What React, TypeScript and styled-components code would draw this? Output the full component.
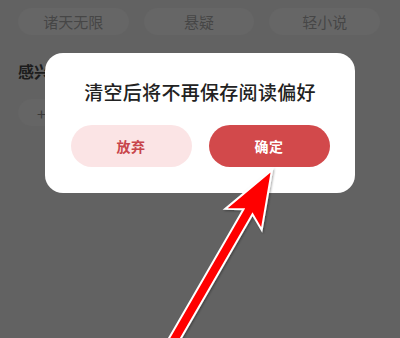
import React from "react";
import styled, { createGlobalStyle } from "styled-components";

const GlobalStyle = createGlobalStyle`
  html, body {
    margin: 0;
    padding: 0;
    background: #626262;
    font-family: "Noto Sans CJK SC", "Noto Sans", sans-serif;
  }
`;

const Page = styled.div`
  position: relative;
  width: 400px;
  height: 338px;
  overflow: hidden;
  background: #626262;
`;

const TagRow = styled.div`
  display: flex;
  gap: 15px;
  padding: 8px 20px 0 18px;
`;

const Tag = styled.div`
  flex: 1;
  height: 27px;
  border-radius: 14px;
  background: #666;
  color: #464646;
  font-size: 15px;
  display: flex;
  align-items: center;
  justify-content: center;
`;

const SectionTitle = styled.div`
  padding: 25px 18px 0;
  font-size: 16px;
  font-weight: 700;
  color: #1c1c1c;
  line-height: 22px;
`;

const AddTag = styled.div`
  margin: 17px 0 0 18px;
  width: 110px;
  height: 27px;
  border-radius: 14px;
  background: #656565;
  color: #3a3a3a;
  font-size: 16px;
  display: flex;
  align-items: center;
  padding-left: 19px;
  box-sizing: border-box;
`;

const Dialog = styled.div`
  position: absolute;
  left: 45px;
  top: 53px;
  width: 310px;
  height: 140px;
  background: #fff;
  border-radius: 18px;
  display: flex;
  flex-direction: column;
  align-items: center;
  box-sizing: border-box;
  padding-top: 25px;
`;

const DialogTitle = styled.div`
  font-size: 19px;
  font-weight: 500;
  color: #222;
  line-height: 28px;
  letter-spacing: 0.3px;
`;

const ButtonRow = styled.div`
  display: flex;
  gap: 17px;
  margin-top: 19px;
`;

const Button = styled.div<{ $primary?: boolean }>`
  width: 121px;
  height: 42px;
  border-radius: 21px;
  background: ${(p) => (p.$primary ? "#d2494b" : "#fbe4e5")};
  color: ${(p) => (p.$primary ? "#fff" : "#c8454b")};
  font-size: 14px;
  font-weight: 700;
  letter-spacing: 0.5px;
  display: flex;
  align-items: center;
  justify-content: center;
`;

const ArrowLayer = styled.svg`
  position: absolute;
  left: 0;
  top: 0;
  pointer-events: none;
`;

export default function App() {
  return (
    <>
      <GlobalStyle />
      <Page>
        <TagRow>
          <Tag>诸天无限</Tag>
          <Tag>悬疑</Tag>
          <Tag>轻小说</Tag>
        </TagRow>
        <SectionTitle>感兴趣的分类</SectionTitle>
        <AddTag>+</AddTag>
        <Dialog>
          <DialogTitle>清空后将不再保存阅读偏好</DialogTitle>
          <ButtonRow>
            <Button>放弃</Button>
            <Button $primary>确定</Button>
          </ButtonRow>
        </Dialog>
        <ArrowLayer width="400" height="338" viewBox="0 0 400 338">
          <defs>
            <filter id="sh" x="-20%" y="-20%" width="140%" height="140%">
              <feDropShadow dx="1" dy="1" stdDeviation="1.2" floodColor="#000" floodOpacity="0.35" />
            </filter>
          </defs>
          <polygon
            points="272,170 261.7,229.9 252.5,214.2 171.5,354.5 162.5,349.5 243.5,209.2 225.3,208.9"
            fill="#ff0000"
            stroke="#fff"
            strokeWidth="2"
            strokeLinejoin="miter"
            filter="url(#sh)"
          />
        </ArrowLayer>
      </Page>
    </>
  );
}
